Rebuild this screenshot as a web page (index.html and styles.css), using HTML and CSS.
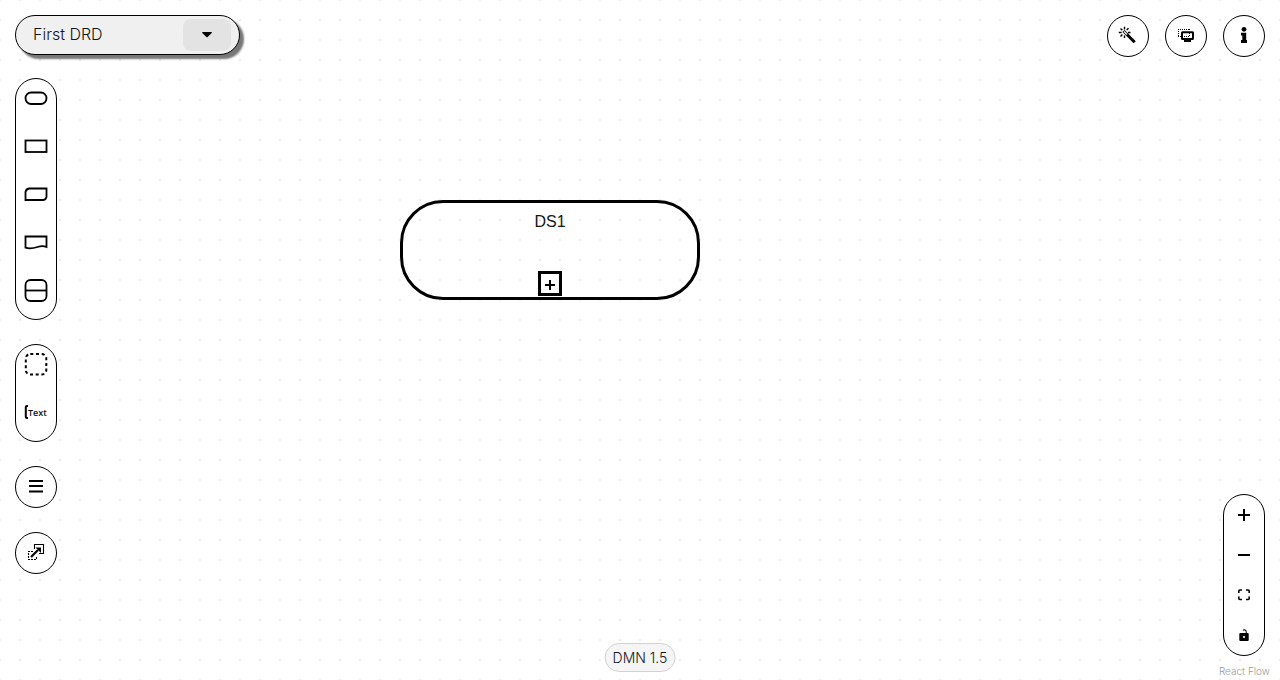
FILE: index.html
```html
<!DOCTYPE html>
<html lang="en">
<head>
<meta charset="utf-8">
<title>DMN Editor</title>
<link rel="stylesheet" href="styles.css">
</head>
<body>
<main class="canvas">
  <section class="node" aria-label="Decision service DS1">
    <span class="node-name">DS1</span>
    <button class="expand" aria-label="Expand"><svg width="12" height="12" viewBox="0 0 12 12"><path d="M6 2v10M1 7h10" stroke-width="2"/></svg></button>
  </section>

  <div class="panel panel-left">
    <div class="drd">
      <span class="drd-name">First DRD</span>
      <button class="drd-toggle" aria-label="Select DRD"><svg width="10" height="6" viewBox="0 0 10 6"><path class="fill" d="M.5 0h9q.8.3.2 1L5.600 5q-.6.5-1.200 0L.3 1Q-.2.3.5 0z"/></svg></button>
    </div>
    <nav class="tools">
      <div class="pill palette">
        <button class="tool" aria-label="Input data"><svg width="24" height="24" viewBox="0 0 24 24"><rect x="1.500" y="6.500" width="21" height="11.500" rx="5.700"/></svg></button>
        <button class="tool" aria-label="Decision"><svg width="24" height="24" viewBox="0 0 24 24"><rect x="1.500" y="6.500" width="21" height="11.500"/></svg></button>
        <button class="tool" aria-label="Business knowledge model"><svg width="24" height="24" viewBox="0 0 24 24"><path d="M5 6.500h17.500v8.500q-.5 2.500-3 3H1.500V10q.5-3 3.500-3.500z"/></svg></button>
        <button class="tool" aria-label="Knowledge source"><svg width="24" height="24" viewBox="0 0 24 24"><path d="M1.500 6.500h21v10.500c-3-1.200-6-1-9 0s-8 2-12 .7z"/></svg></button>
        <button class="tool" aria-label="Decision service"><svg width="24" height="24" viewBox="0 0 24 24"><rect x="1.500" y="2" width="21" height="21" rx="5"/><path d="M2 12.500h20.500"/></svg></button>
      </div>
      <div class="pill palette">
        <button class="tool" aria-label="Group"><svg width="24" height="24" viewBox="0 0 24 24"><rect x="1.800" y="2" width="20.500" height="20.500" rx="4.500" stroke-width="2" stroke-dasharray="3 2.700"/></svg></button>
        <button class="tool" aria-label="Text annotation"><svg width="24" height="24" viewBox="0 0 24 24"><path d="M4 6H3q-1.200 0-1.200 1v10q0 1 1.200 1h1" stroke-width="2"/><text class="annotation" x="4" y="16">Text</text></svg></button>
      </div>
      <button class="round" aria-label="External nodes"><svg width="20" height="20" viewBox="0 0 20 20"><path d="M3 4h14M3 9h14M3 14.500h14" stroke-width="2.200"/></svg></button>
      <button class="round" aria-label="Autolayout"><svg width="20" height="20" viewBox="0 0 20 20"><path d="M8.500 6V1.500h9v9H13" stroke-width="1.100"/><path d="M7 8.500H2.500v8h8V13" stroke-width="1.100" stroke-dasharray="2 1"/><path d="M5 14l7-7" stroke-width="2.200"/><path class="fill" d="M9.500 4.500H15V10z"/></svg></button>
    </nav>
  </div>

  <div class="panel panel-actions">
    <button class="round" aria-label="Autolayout wand"><svg width="20" height="20" viewBox="0 0 20 20"><path d="M9 8.500l7.700 7.700" stroke-width="3"/><path d="M5.500 5l4 4" stroke-width="3"/><path d="M6 5.500l3 3" stroke="#fff" stroke-width="1.200"/><path d="M6.500.8v2.700M2.500 2.500l1.900 1.700M.8 6.500h2.800M2.500 10.500l1.900-1.900M6.500 9.500V12M10.500 2.300L8.700 4.100M10 6.500h2.500" stroke-width="1.400"/></svg></button>
    <button class="round" aria-label="Overlays"><svg width="20" height="20" viewBox="0 0 20 20"><path d="M2 3.500h12M2 10.500h3" stroke-width="1" stroke-dasharray="1 1"/><path d="M2.500 3v8M13.500 3v2" stroke-width="1" stroke-dasharray="1 1"/><rect x="6" y="6.300" width="11" height="6.700" rx=".5" stroke-width="2"/><path d="M8 10.500h6M13.500 7v3" stroke-width="1" stroke-dasharray="1 1"/><path d="M11.500 13v2M8 15h7" stroke-width="1.800"/></svg></button>
    <button class="round" aria-label="Properties"><svg width="20" height="20" viewBox="0 0 20 20"><circle class="fill" cx="10" cy="3.300" r="2.400"/><path class="fill" d="M7 6.700h5.200v7.300H13v3H7v-3h1.300V9.500H7z"/></svg></button>
  </div>

  <div class="panel panel-zoom">
    <div class="pill controls">
      <button class="control" aria-label="Zoom in"><svg width="12" height="12" viewBox="0 0 12 12"><path d="M6 0v12M0 6h12" stroke-width="2"/></svg></button>
      <button class="control" aria-label="Zoom out"><svg width="12" height="12" viewBox="0 0 12 12"><path d="M0 6h12" stroke-width="2"/></svg></button>
      <button class="control" aria-label="Fit view"><svg width="12" height="12" viewBox="0 0 12 12"><path d="M.8 4V2q0-1 1-1H4M8 1h2.200q1 0 1 1v2M11.200 7.500V9.500q0 1-1 1H8M4 10.500H1.800q-1 0-1-1V7.500" stroke-width="1.600"/></svg></button>
      <button class="control" aria-label="Lock"><svg width="12" height="12" viewBox="0 0 12 12"><rect class="fill" x="1.300" y="4" width="9.400" height="8" rx="1"/><circle cx="6" cy="8" r="1.100" fill="#fff" stroke="none"/><path d="M5 1.200Q8.300-.2 8.300 4" stroke-width="1.100"/></svg></button>
    </div>
  </div>
  <a class="credit" href="#">React Flow</a>
  <div class="version">DMN 1.5</div>
</main>
</body>
</html>
```
FILE: styles.css
```css
* { box-sizing: border-box; }
body {
  margin: 0;
  font-family: Inter, "Noto Sans", sans-serif;
  font-size: 16px;
  color: #151515;
}
button {
  display: flex;
  align-items: center;
  justify-content: center;
  padding: 0;
  border: 0;
  background: none;
  cursor: pointer;
}
svg {
  display: block;
  fill: none;
  stroke: #000;
  stroke-width: 1.8;
  overflow: visible;
}
.fill { fill: #000; stroke: none; }
.canvas {
  position: relative;
  min-height: 100vh;
  overflow: hidden;
  background-color: #fff;
  background-image: conic-gradient(from 90deg at 18px 18px, #ebebeb 90deg, transparent 0);
  background-size: 20px 20px;
  background-position: 1px 1px;
}
.panel { position: absolute; }
.panel-left { top: 15px; left: 15px; }
.panel-actions { top: 15px; right: 15px; display: flex; gap: 16px; }
.panel-zoom { right: 15px; bottom: 24px; }
.drd {
  display: flex;
  align-items: center;
  justify-content: space-between;
  width: 225px;
  height: 40px;
  padding: 0 8px 0 17px;
  border: 1px solid #000;
  border-radius: 20px;
  background: #f0f0f0;
  box-shadow: 4px 4px 2px #777;
}
.drd-name {
  font-weight: 300;
  line-height: 20px;
  padding-bottom: 2px;
}
.drd-toggle {
  width: 48px;
  height: 32px;
  border-radius: 8px;
  background: #e3e3e3;
}
.tools {
  display: flex;
  flex-direction: column;
  align-items: flex-start;
  gap: 24px;
  margin-top: 23px;
}
.pill, .round {
  width: 42px;
  border: 1px solid #000;
  border-radius: 21px;
  background: #fff;
}
.round { height: 42px; }
.tool { width: 40px; height: 38px; margin-bottom: 10px; }
.control { width: 40px; height: 40px; }
.annotation {
  fill: #151515;
  stroke: none;
  font: 600 9px "Open Sans", "Noto Sans", sans-serif;
}
.node {
  position: absolute;
  top: 200px;
  left: 400px;
  display: flex;
  flex-direction: column;
  align-items: center;
  justify-content: space-between;
  width: 300px;
  height: 100px;
  padding: 10px 0 1px;
  border: 3px solid #000;
  border-radius: 43px;
}
.node-name {
  font-family: "Liberation Sans", Arial, sans-serif;
  line-height: 18px;
}
.expand {
  width: 24px;
  height: 25px;
  border: 3px solid #000;
}
.version {
  position: absolute;
  bottom: 8px;
  left: 50%;
  transform: translateX(-50%);
  padding: 0 7px;
  border: 1px solid #d2d2d2;
  border-radius: 15px;
  background: #f5f5f5;
  font-size: 14px;
  font-weight: 300;
  line-height: 27px;
  white-space: nowrap;
}
.credit {
  position: absolute;
  right: 10px;
  bottom: 3px;
  color: #999;
  font-size: 10px;
  font-weight: 300;
  line-height: 12px;
  text-decoration: none;
}
```
